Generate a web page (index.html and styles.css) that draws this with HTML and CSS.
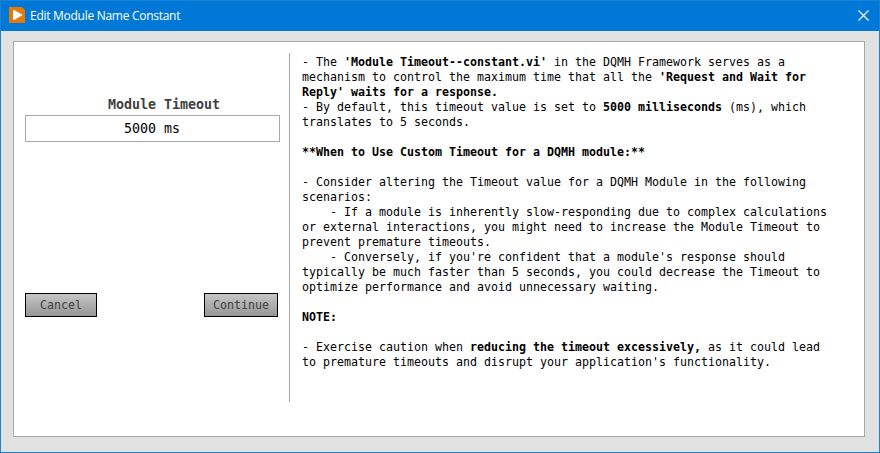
FILE: index.html
```
<!DOCTYPE html>
<html lang="en">
<head>
<meta charset="utf-8">
<title>Edit Module Name Constant</title>
<link rel="stylesheet" href="styles.css">
</head>
<body>
<div class="window">
  <header class="titlebar">
    <svg class="logo" width="16" height="16" viewBox="0 0 16 16"><path d="M0 0H13L16 3V16H0Z" fill="#e57a08"/><path d="M4 3.5L5 3L13 7.5V8.5L5 13L4 12.5Z" fill="#fff"/></svg>
    <h1 class="title">Edit Module Name Constant</h1>
    <svg class="close" width="11" height="11" viewBox="0 0 11 11"><path d="M.5 .5L10.5 10.5M10.5 .5L.5 10.5" stroke="#fff" stroke-width="1.1"/></svg>
  </header>
  <main class="panel">
    <section class="form">
      <label class="label">Module Timeout</label>
      <div class="field">5000 ms</div>
      <div class="actions"><button class="btn">Cancel</button><button class="btn continue">Continue</button></div>
    </section>
    <section class="help">
      <p>- The <b>'Module Timeout--constant.vi'</b> in the DQMH Framework serves as a</p>
      <p>mechanism to control the maximum time that all the <b>'Request and Wait for</b></p>
      <p><b>Reply' waits for a response.</b></p>
      <p>- By default, this timeout value is set to <b>5000 milliseconds</b> (ms), which</p>
      <p>translates to 5 seconds.</p>
      <p></p>
      <p><b>**When to Use Custom Timeout for a DQMH module:**</b></p>
      <p></p>
      <p>- Consider altering the Timeout value for a DQMH Module in the following</p>
      <p>scenarios:</p>
      <p class="nested">- If a module is inherently slow-responding due to complex calculations</p>
      <p>or external interactions, you might need to increase the Module Timeout to</p>
      <p>prevent premature timeouts.</p>
      <p class="nested">- Conversely, if you're confident that a module's response should</p>
      <p>typically be much faster than 5 seconds, you could decrease the Timeout to</p>
      <p>optimize performance and avoid unnecessary waiting.</p>
      <p></p>
      <p><b>NOTE:</b></p>
      <p></p>
      <p>- Exercise caution when <b>reducing the timeout excessively,</b> as it could lead</p>
      <p>to premature timeouts and disrupt your application's functionality.</p>
    </section>
  </main>
</div>
</body>
</html>
```
FILE: styles.css
```
* { box-sizing: border-box; }
body { margin: 0; }
.window { width: 880px; height: 453px; background: #e1e1e1; border: 1px solid #1883d7; }
.titlebar { height: 30px; background: #0078d7; display: flex; align-items: center; padding: 0 10px 2px 8px; }
.title { margin: 0 auto 0 5px; font: 12px "Open Sans", sans-serif; letter-spacing: -0.28px; color: #fff; }
.panel { margin: 10px 14px 0 12px; height: 396px; background: #fff; border: 1px solid #a6a8ab; display: flex; padding: 11px 0 0 11px; }
.form { width: 265px; height: 349px; border-right: 1px solid #a6a8ab; padding-top: 43px; }
.label { display: block; margin-left: 83px; height: 19px; font: bold 13.3px/17px "DejaVu Sans Mono", monospace; color: #404040; }
.field { width: 255px; height: 27px; border: 1px solid #a6a8ab; text-align: center; font: 13.3px/25px "DejaVu Sans Mono", monospace; text-indent: -1px; }
.actions { display: flex; justify-content: space-between; margin-top: 151px; width: 253px; }
.btn { width: 72px; height: 24px; padding: 0; border: 1px solid #000; background: linear-gradient(#c6c6c6, #969696); color: #404040; font: 11.63px "DejaVu Sans Mono", monospace; }
.continue { width: 74px; }
.help { margin: 2px 0 0 12px; font: 11.63px/15px "DejaVu Sans Mono", monospace; color: #000; white-space: nowrap; }
.help p { margin: 0; height: 15px; }
.help .nested { padding-left: 28px; }
```
